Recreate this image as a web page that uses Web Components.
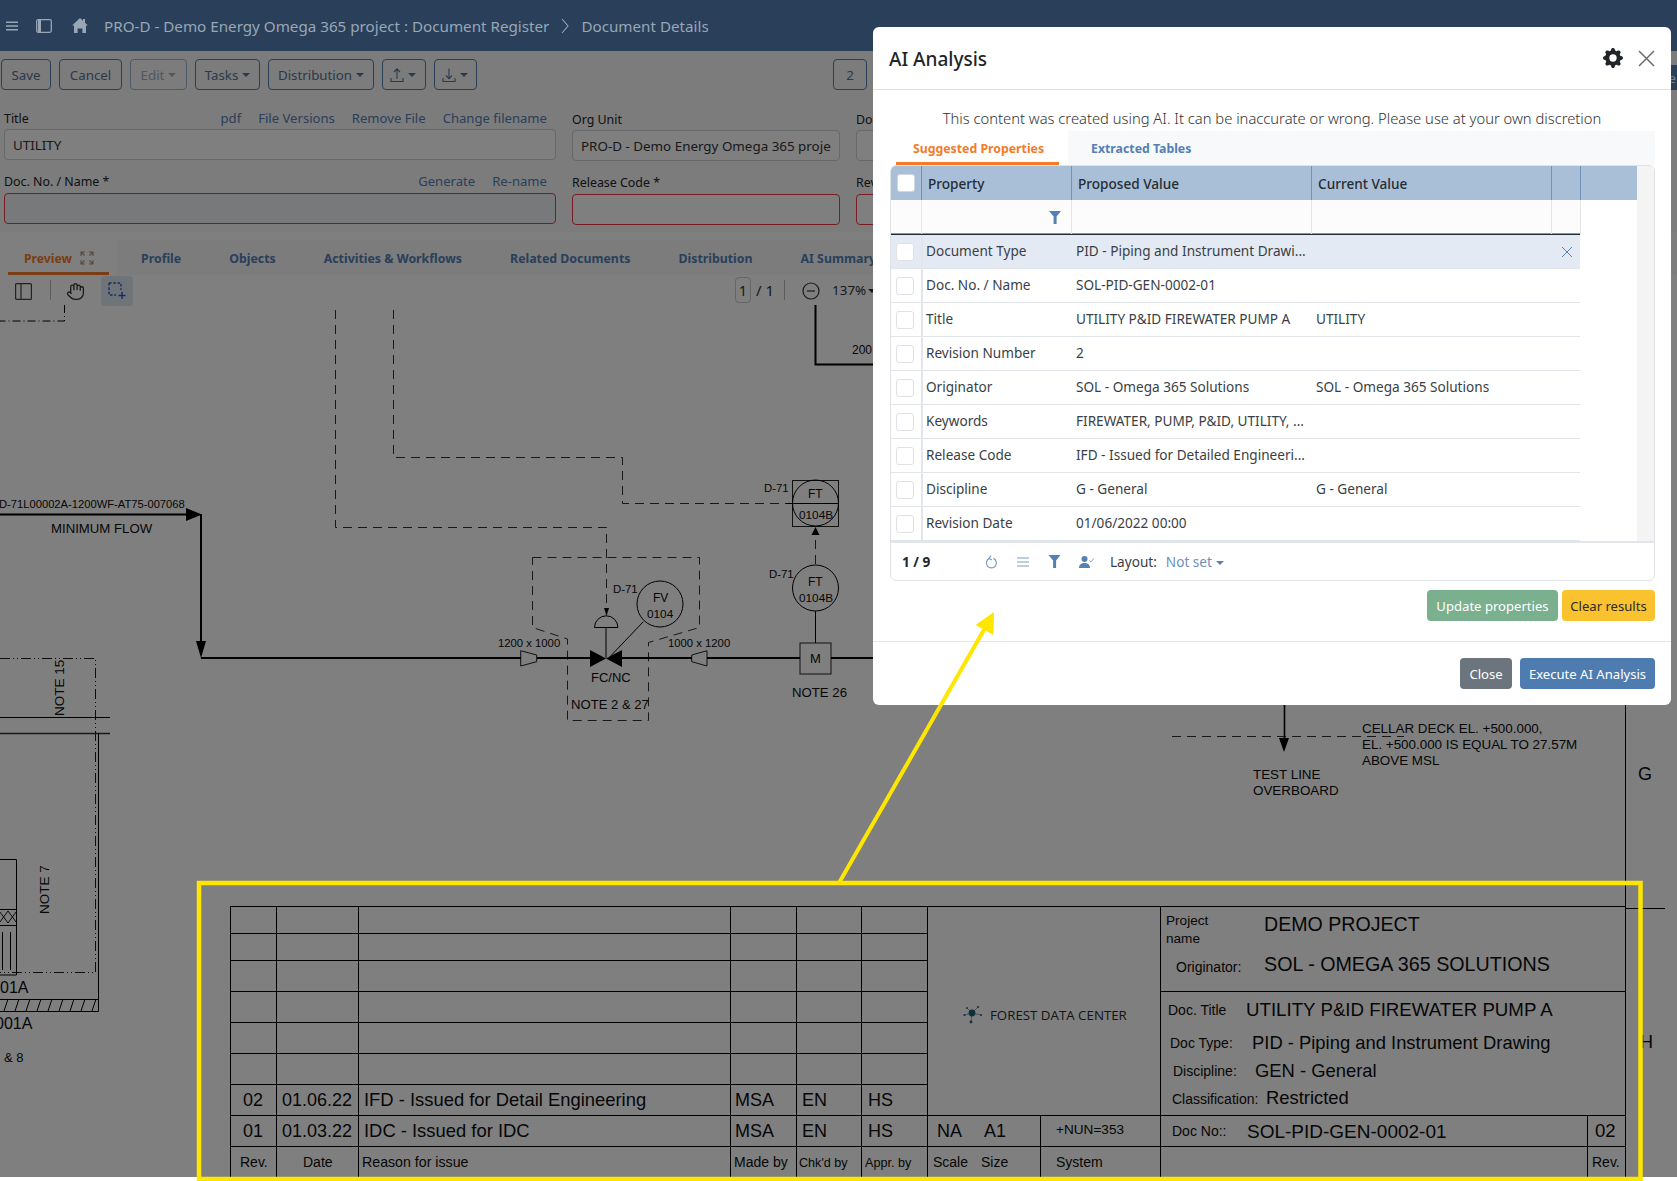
<!DOCTYPE html>
<html>
<head>
<meta charset="utf-8">
<title>AI Analysis</title>
<style>
  html, body { margin: 0; height: 1181px; overflow: hidden; background: #fff; }
  body { position: relative; font-family: "Noto Sans", "Open Sans", sans-serif; font-size: 13px; color: #212529; }
</style>
</head>
<body>
<doc-page>
  <app-header>
    <span>PRO-D - Demo Energy Omega 365 project : Document Register</span>
    <span slot="current">Document Details</span>
  </app-header>
  <doc-toolbar>
    <tool-btn style="width:50px">Save</tool-btn>
    <tool-btn style="width:63px">Cancel</tool-btn>
    <tool-btn style="width:57px" caret disabled>Edit</tool-btn>
    <tool-btn style="width:65px" caret>Tasks</tool-btn>
    <tool-btn style="width:106px" caret>Distribution</tool-btn>
    <tool-btn style="width:44px" caret><svg width="16" height="16" viewBox="0 0 16 16" fill="none" stroke="currentColor" stroke-width="1.1"><path d="M8 12V2M5 5l3-3.2L11 5M2 11v3.5h12V11"/></svg></tool-btn>
    <tool-btn style="width:43px" caret><svg width="16" height="16" viewBox="0 0 16 16" fill="none" stroke="currentColor" stroke-width="1.1"><path d="M8 1.5v10M5 8.5l3 3.2 3-3.2M2 11v3.5h12V11"/></svg></tool-btn>
    <tool-btn style="width:34px;margin-left:348px">2</tool-btn>
    <tool-btn style="width:50px;height:25px;margin-top:6px;margin-left:auto" filled>Close</tool-btn>
  </doc-toolbar>
  <doc-form>
    <doc-field label="Title" value="UTILITY" links="pdf|File Versions|Remove File|Change filename"></doc-field>
    <doc-field label="Org Unit" value="PRO-D - Demo Energy Omega 365 project" style="margin-top:1px"></doc-field>
    <doc-field label="Document Date" style="margin-top:1px"></doc-field>
    <doc-field label="Doc. No. / Name *" links="Generate|Re-name" invalid tinted></doc-field>
    <doc-field label="Release Code *" invalid style="margin-top:1px"></doc-field>
    <doc-field label="Revision *" invalid style="margin-top:1px"></doc-field>
  </doc-form>
  <doc-tabs></doc-tabs>
  <pdf-toolbar></pdf-toolbar>
  <pdf-canvas></pdf-canvas>
  <modal-backdrop></modal-backdrop>
</doc-page>
<ai-modal>
  <ai-grid></ai-grid>
</ai-modal>
<callout-overlay></callout-overlay>

<script>
  class DocPage extends HTMLElement {
    constructor() {
      super();
      this.attachShadow({ mode: 'open' });
      this.shadowRoot.innerHTML = `
        <style>
          :host { display: flex; flex-direction: column; position: relative; height: 1177px; overflow: hidden; background: #fff; }
        </style>
        <slot></slot>`;
    }
  }

  class AppHeader extends HTMLElement {
    constructor() {
      super();
      this.attachShadow({ mode: 'open' });
      this.shadowRoot.innerHTML = `
        <style>
          :host { display: flex; align-items: center; flex: none; height: 51px; background: #2a405a; color: #98a6b5; font-size: 15.2px; position: relative; z-index: 2; }
          svg { display: block; flex: none; }
          .crumb { margin-left: 16px; white-space: nowrap; }
          .sep { margin: 0 11px 0 11px; }
        </style>
        <svg style="margin-left:6px" width="12" height="12" viewBox="0 0 12 12" fill="#98a6b5"><path d="M0 1.5h12v1.6H0zM0 5.2h12v1.6H0zM0 8.9h12v1.6H0z"/></svg>
        <svg style="margin-left:18px" width="16" height="14" viewBox="0 0 16 14" fill="none" stroke="#98a6b5" stroke-width="1.3"><rect x=".7" y=".7" width="14.6" height="12.6" rx="1.5"/><path d="M2 1h3v12H2z" fill="#98a6b5" stroke="none"/></svg>
        <svg style="margin-left:20px" width="16" height="15" viewBox="0 0 16 15" fill="#98a6b5"><path d="M8 0l3 2.8V1h2v3.7L16 7.5h-2V15h-3.6v-4.5H5.6V15H2V7.5H0z"/></svg>
        <span class="crumb"><slot></slot></span>
        <svg class="sep" width="10" height="18" viewBox="0 0 10 18" fill="none" stroke="#98a6b5" stroke-width="1.1"><path d="M2 2l6 7-6 7"/></svg>
        <slot name="current"></slot>`;
    }
  }

  class DocToolbar extends HTMLElement {
    constructor() {
      super();
      this.attachShadow({ mode: 'open' });
      this.shadowRoot.innerHTML = `
        <style>
          :host { display: flex; gap: 8px; flex: none; box-sizing: border-box; height: 39px; padding: 8px 0 0 1px; margin-right: -6px; background: #f8f8f8; }
        </style>
        <slot></slot>`;
    }
  }

  class ToolBtn extends HTMLElement {
    constructor() {
      super();
      this.attachShadow({ mode: 'open' });
      const caret = this.hasAttribute('caret') ? '<i></i>' : '';
      this.shadowRoot.innerHTML = `
        <style>
          :host { display: inline-flex; align-items: center; justify-content: center; box-sizing: border-box; height: 31px; border: 1px solid #5480b4; border-radius: 4px; color: #54749a; font-size: 13.3px; white-space: nowrap; }
          :host([disabled]) { opacity: .55; }
          :host([filled]) { background: #5480b4; color: #fff; justify-content: flex-end; padding-right: 6px; }
          i { display: inline-block; margin-left: 4px; border: 4px solid transparent; border-top-color: currentColor; border-bottom: 0; }
          ::slotted(svg) { display: block; margin-left: -3px; margin-right: -1px; }
        </style>
        <slot></slot>${caret}`;
    }
  }

  class DocForm extends HTMLElement {
    constructor() {
      super();
      this.attachShadow({ mode: 'open' });
      this.shadowRoot.innerHTML = `
        <style>
          :host { display: grid; flex: none; grid-template-columns: 552px 268px 200px; column-gap: 16px; row-gap: 10px; box-sizing: border-box; height: 142px; padding: 18px 0 0 4px; background: #f8f8f8; align-content: start; }
        </style>
        <slot></slot>`;
    }
  }

  class DocField extends HTMLElement {
    constructor() {
      super();
      this.attachShadow({ mode: 'open' });
      const links = (this.getAttribute('links') || '').split('|').filter(Boolean)
        .map(l => `<a>${l}</a>`).join('');
      this.shadowRoot.innerHTML = `
        <style>
          :host { display: block; min-width: 0; font-size: 12.4px; }
          .top { display: flex; height: 21px; align-items: center; padding-bottom: 1px; box-sizing: border-box; }
          :host([invalid]) .top { height: 22px; padding-bottom: 2px; }
          .top span { margin-right: auto; }
          a { margin-left: 17px; color: #5480b4; font-size: 13.1px; }
          .links { display: flex; padding-right: 9px; }
          .box { box-sizing: border-box; height: 31px; line-height: 30px; padding: 0 8px; border: 1px solid #ccd0d5; border-radius: 4px; background: #fff; font-size: 13.4px; color: #333; }
          .box div { overflow: hidden; white-space: nowrap; }
          :host([invalid]) .box { border-color: #f0394c; }
          :host([tinted]) .box { background: #f0f2f7; }
        </style>
        <div class="top"><span>${this.getAttribute('label')}</span><div class="links">${links}</div></div>
        <div class="box"><div>${this.getAttribute('value') || ''}</div></div>`;
    }
  }

  class DocTabs extends HTMLElement {
    constructor() {
      super();
      this.attachShadow({ mode: 'open' });
      const tabs = ['Profile', 'Objects', 'Activities & Workflows', 'Related Documents', 'Distribution', 'AI Summary'];
      this.shadowRoot.innerHTML = `
        <style>
          :host { display: flex; flex: none; height: 35px; margin-top: 8px; font-size: 12.35px; font-weight: 700; color: #5480b4; white-space: nowrap; background: #f8f8f8; }
          .active { display: flex; align-items: center; box-sizing: border-box; width: 117px; padding: 1px 0 0 24px; background: #fff; color: #f47b2a; position: relative; font-size: 12.2px; }
          .active:after { content: ""; position: absolute; left: 8px; width: 101px; bottom: 0; height: 3px; background: #f47b2a; }
          .active svg { margin-left: 8px; }
          .tab { display: flex; align-items: center; padding: 1px 24px 0; }
        </style>
        <div class="active">Preview
          <svg width="14" height="14" viewBox="0 0 14 14" fill="none" stroke="#a89080" stroke-width="1.1"><path d="M1 5V1h4M9 1h4v4M13 9v4H9M5 13H1V9M1 1l3.5 3.5M13 1L9.5 4.5M13 13L9.5 9.5M1 13l3.5-3.5"/></svg>
        </div>
        ${tabs.map(t => `<div class="tab">${t.replace('&', '&amp;')}</div>`).join('')}`;
    }
  }

  class PdfToolbar extends HTMLElement {
    constructor() {
      super();
      this.attachShadow({ mode: 'open' });
      this.shadowRoot.innerHTML = `
        <style>
          :host { display: flex; flex: none; align-items: center; height: 30px; color: #333; white-space: nowrap; }
          svg { display: block; flex: none; }
          .div { width: 1px; height: 20px; background: #bbb; }
          .sel { display: flex; align-items: center; justify-content: center; width: 32px; height: 30px; border-radius: 4px; background: #dfe8f0; margin-top: 2px; }
          .page { box-sizing: border-box; width: 16px; height: 26px; line-height: 24px; text-align: center; border: 1px solid #ccc; border-radius: 4px; font-size: 14.6px; }
          .of { margin-left: 5px; font-size: 15px; }
          .zoom { margin-left: 12px; font-size: 13.4px; }
          .zoom:after { content: ""; display: inline-block; margin-left: 2px; vertical-align: 2px; border: 4px solid transparent; border-top-color: #333; border-bottom: 0; }
        </style>
        <svg style="margin:2px 0 0 15px" width="17" height="17" viewBox="0 0 17 17" fill="none" stroke="#444" stroke-width="1.2"><rect x=".6" y=".6" width="15.8" height="15.8" rx="1"/><path d="M6 1v15"/></svg>
        <div class="div" style="margin-left:18px"></div>
        <svg style="margin:2px 0 0 15px" width="19" height="19" viewBox="0 0 24 24" fill="none" stroke="#333" stroke-width="1.6"><path d="M18 11V6a2 2 0 0 0-2-2a2 2 0 0 0-2 2M14 10V4a2 2 0 0 0-2-2a2 2 0 0 0-2 2v2M10 10.5V6a2 2 0 0 0-2-2a2 2 0 0 0-2 2v8M18 8a2 2 0 1 1 4 0v6a8 8 0 0 1-8 8h-2c-2.8 0-4.5-.86-5.99-2.34l-3.6-3.6a2 2 0 0 1 2.83-2.82L7 15"/></svg>
        <div class="sel" style="margin-left:16px"><svg width="18" height="18" viewBox="0 0 18 18" fill="none" stroke="#2456d6" stroke-width="1.4"><path d="M1 1h12v7M1 1v12h7" stroke-dasharray="2.6 1.7"/><path d="M14 10v7M10.5 13.5h7"/></svg></div>
        <div class="page" style="margin-left:602px">1</div>
        <span class="of">/ 1</span>
        <div class="div" style="margin-left:10px"></div>
        <svg style="margin:2px 0 0 17px" width="18" height="18" viewBox="0 0 18 18" fill="none" stroke="#333" stroke-width="1.2"><circle cx="9" cy="9" r="8"/><path d="M5 9h8"/></svg>
        <span class="zoom">137%</span>`;
    }
  }

  // title block and process lines, in page coordinates
  const t = (x, cy, size, str, extra = '') =>
    `<text x="${x}" y="${(cy + size * (size < 15 ? .38 : .33)).toFixed(1)}" font-size="${size}" ${extra}>${str.replace(/&/g, '&amp;')}</text>`;

  const drawingTexts = [
    [-1, 504, 11.2, 'D-71L00002A-1200WF-AT75-007068'], [51, 528, 13.2, 'MINIMUM FLOW'], [852, 349, 12, '200'],
    [498, 643, 11.3, '1200 x 1000'], [668, 643, 11.3, '1000 x 1200'], [613, 589, 11.4, 'D-71'],
    [653, 597, 12, 'FV'], [647, 613, 11.8, '0104'], [591, 677, 13, 'FC/NC'], [571, 704, 13.1, 'NOTE 2 & 27'],
    [764, 488, 11.4, 'D-71'], [808, 493, 12, 'FT'], [799, 514, 11.8, '0104B'], [769, 574, 11.4, 'D-71'],
    [808, 581, 12, 'FT'], [799, 597, 11.8, '0104B'], [810, 658, 13, 'M'], [792, 692, 13.2, 'NOTE 26'],
    [1362, 728, 13.4, 'CELLAR DECK EL. +500.000,'], [1362, 744, 13.4, 'EL. +500.000 IS EQUAL TO 27.57M'], [1362, 760, 13.4, 'ABOVE MSL'],
    [1253, 774, 13.4, 'TEST LINE'], [1253, 790, 13.4, 'OVERBOARD'], [1638, 774, 18, 'G'], [1640, 1042, 18, 'H'],
    [0, 988, 16, '01A'], [-5, 1024, 16, '001A'], [4, 1057, 13, '& 8'],
    [243, 1100, 18, '02'], [282, 1100, 18, '01.06.22'], [364, 1100, 18.4, 'IFD - Issued for Detail Engineering'],
    [735, 1100, 18, 'MSA'], [802, 1100, 18, 'EN'], [868, 1100, 18, 'HS'],
    [243, 1131, 18, '01'], [282, 1131, 18, '01.03.22'], [364, 1131, 18.4, 'IDC - Issued for IDC'],
    [735, 1131, 18, 'MSA'], [802, 1131, 18, 'EN'], [868, 1131, 18, 'HS'],
    [240, 1162, 14, 'Rev.'], [303, 1162, 14, 'Date'], [362, 1162, 14.2, 'Reason for issue'],
    [734, 1162, 14, 'Made by'], [799, 1162, 12.6, "Chk'd by"], [865, 1162, 12.6, 'Appr. by'],
    [933, 1162, 14, 'Scale'], [981, 1162, 14, 'Size'], [1056, 1162, 14, 'System'],
    [937, 1131, 18, 'NA'], [984, 1131, 18, 'A1'], [1056, 1129, 13.6, '+NUN=353'],
    [1166, 920, 13.6, 'Project'], [1166, 938, 13.6, 'name'], [1264, 924, 19.6, 'DEMO PROJECT'],
    [1176, 967, 14, 'Originator:'], [1264, 964, 19.7, 'SOL - OMEGA 365 SOLUTIONS'],
    [1168, 1010, 14, 'Doc. Title'], [1246, 1010, 18.7, 'UTILITY P&ID FIREWATER PUMP A'],
    [1170, 1043, 14, 'Doc Type:'], [1252, 1043, 18.4, 'PID - Piping and Instrument Drawing'],
    [1173, 1071, 14, 'Discipline:'], [1255, 1071, 18.4, 'GEN - General'],
    [1172, 1099, 14, 'Classification:'], [1266, 1098, 18.4, 'Restricted'],
    [1172, 1131, 14, 'Doc No::'], [1247, 1132, 19, 'SOL-PID-GEN-0002-01'],
    [1595, 1131, 18.6, '02'], [1592, 1162, 14, 'Rev.']
  ];

  // [x1, y1, x2, y2] pairs for the title block grid
  const gridLines = [
    [230, 906.5, 1625, 906.5], [230, 933.5, 927.5, 933.5], [230, 960.5, 927.5, 960.5], [230, 991.5, 927.5, 991.5],
    [230, 1022.5, 927.5, 1022.5], [230, 1053.5, 927.5, 1053.5], [230, 1084.5, 927.5, 1084.5],
    [230, 1115.5, 1625, 1115.5], [230, 1146.5, 1625, 1146.5], [1160.5, 991.5, 1625, 991.5],
    [230.5, 906, 230.5, 1177], [276.5, 906, 276.5, 1177], [358.5, 906, 358.5, 1177], [730.5, 906, 730.5, 1177],
    [796.5, 906, 796.5, 1177], [861.5, 906, 861.5, 1177], [927.5, 906, 927.5, 1177], [1040.5, 1115, 1040.5, 1177],
    [1160.5, 906, 1160.5, 1177], [1587.5, 1115, 1587.5, 1177], [1625.5, 705, 1625.5, 1177], [1625, 908.5, 1665, 908.5]
  ];

  class PdfCanvas extends HTMLElement {
    constructor() {
      super();
      this.attachShadow({ mode: 'open' });
      const hatch = Array.from({ length: 9 }, (_, i) => `M${4 + i * 11} 1011L${8 + i * 11} 999`).join('');
      const lines = gridLines.map(l => `M${l[0]} ${l[1]}L${l[2]} ${l[3]}`).join('');
      this.shadowRoot.innerHTML = `
        <style>
          :host { display: block; flex: 1; min-height: 0; }
          svg { display: block; font-family: "Liberation Sans", Arial, sans-serif; }
          text { fill: #0c0c0c; }
          .dash { stroke: #1a1a1a; stroke-width: .9; stroke-dasharray: 9 6; }
        </style>
        <svg width="1677" height="872" viewBox="0 305 1677 872">
          <g fill="none" stroke="#000" stroke-width="1">
            <path d="M64.5 305V321H0" stroke-dasharray="8 3 1 3"/>
            <path class="dash" d="M335.5 310V527.5H606.5V612"/>
            <path class="dash" d="M393.5 310V457.5H622.5V503.5H790"/>
            <path class="dash" d="M532.5 557.5H699.5V627.5L648.5 642.5V720.5H567.5V639L532.5 627.5Z"/>
            <path class="dash" d="M815.5 564V536"/>
            <path class="dash" d="M1172 736.5H1404"/>
            <path d="M0 658.5H95.5V972.5H0" stroke-dasharray="10 3 1 3 1 3" stroke-width=".9"/>
            <path d="${lines}"/>
            <path d="M0 717.5H110"/>
            <path d="M0 733.5H110" stroke-width="1.4" stroke="#333"/>
            <path d="M98.5 733V1011.5H0M0 999.5H98"/>
            <path d="${hatch}"/>
            <path d="M0 859.5H16.5V975H0M0 909.5H16M0 925.5H16M2.5 932V970M10.5 932V970"/>
            <path d="M0 912l8 11l8-11M0 922l8-11l8 11" stroke-width=".9"/>
            <path d="M815.5 305V364.5H873" stroke-width="2"/>
            <rect x="792.5" y="480.5" width="46" height="46" stroke="#222"/>
            <circle cx="815.5" cy="503" r="23"/>
            <path d="M786 503.5H839"/>
            <circle cx="815.5" cy="588" r="23"/>
            <path d="M815.5 611V643"/>
            <rect x="800" y="643" width="31" height="31" stroke="#222"/>
            <circle cx="660" cy="604" r="23"/>
            <path d="M643.3 621.7L610 656.7M606 627V658"/>
            <path d="M594.5 627.5a11.7 11.7 0 0 1 23.4 0Z"/>
            <path d="M520.7 650.7L536.7 655V661.7L520.7 666Z M691.7 655L707 650.7V666L691.7 661.7Z" stroke="#222"/>
            <path d="M0 514.5H190M201 514V645M201 658H521M537 658H590M622 658H692M707 658H800M831 658H873" stroke-width="2"/>
            <path d="M1284.5 705V740" stroke-width="1.6"/>
          </g>
          <path d="M590 650V667L606 658.5ZM622 650V667L606 658.5ZM186 508V521L202 514.5ZM196 641H206L201 658ZM604 608H609L606.5 616ZM811.5 535H819.5L815.5 527ZM1279 738H1289L1284 752Z" fill="#000"/>
          ${drawingTexts.map(d => t(d[0], d[1], d[2], d[3])).join('')}
          <text transform="translate(64,716) rotate(-90)" font-size="13.5">NOTE 15</text>
          <text transform="translate(49,914) rotate(-90)" font-size="13.5">NOTE 7</text>
          <g fill="#1e5f78">
            <circle cx="972" cy="1013" r="3.4"/><circle cx="964.5" cy="1015" r="1.1"/><circle cx="967" cy="1008" r=".9"/>
            <circle cx="978" cy="1007" r="1"/><circle cx="981" cy="1015" r="1"/><circle cx="971" cy="1022" r="1.4"/>
            <path d="M972 1013L967 1008M972 1013L978 1007M972 1013L964.5 1015M972 1013L971 1022M972 1013L981 1015" stroke="#1e5f78" stroke-width=".5"/>
          </g>
          <text x="990" y="1019.5" font-size="13.3" style="font-family:'Open Sans',sans-serif;fill:#2b2b2b">FOREST DATA CENTER</text>
        </svg>`;
    }
  }

  class ModalBackdrop extends HTMLElement {
    constructor() {
      super();
      this.attachShadow({ mode: 'open' });
      this.shadowRoot.innerHTML = `
        <style>
          :host { display: block; position: absolute; left: 0; right: 0; top: 51px; bottom: 0; background: rgba(0, 0, 0, .5); z-index: 1; }
        </style>`;
    }
  }

  class AiModal extends HTMLElement {
    constructor() {
      super();
      this.attachShadow({ mode: 'open' });
      this.shadowRoot.innerHTML = `
        <style>
          :host { display: flex; flex-direction: column; position: absolute; left: 873px; top: 27px; width: 798px; height: 678px; box-sizing: border-box; background: #fff; border-radius: 6px; z-index: 3; color: #212529; }
          header { display: flex; align-items: center; flex: none; box-sizing: border-box; height: 63px; padding: 0 16px; border-bottom: 1px solid #dee2e6; }
          h1 { margin: 0 auto 0 0; padding-top: 2px; font-size: 19px; font-weight: 500; }
          header svg { display: block; }
          .main { flex: none; padding: 0 16px; }
          .note { height: 41px; box-sizing: border-box; padding-top: 18px; line-height: 21px; text-align: center; font-size: 14.75px; font-weight: 300; color: #333; white-space: nowrap; }
          .tabs { display: flex; height: 34px; background: linear-gradient(to right, #fff 178px, #f8f9fa 178px); font-size: 12.3px; font-weight: 700; margin-left: 1px; }
          .tabs div { display: flex; align-items: center; box-sizing: border-box; }
          .on { width: 163px; margin-left: 6px; padding: 4px 0 0 2px; justify-content: center; color: #f47b2a; border-bottom: 3px solid #f47b2a; }
          .off { margin-left: 32px; color: #5480b4; }
          .actions { display: flex; justify-content: flex-end; gap: 4px; margin-top: 9px; padding-bottom: 20px; }
          footer { display: flex; justify-content: flex-end; gap: 8px; padding: 16px 16px; border-top: 1px solid #e4e6e8; }
          button { box-sizing: border-box; height: 31px; padding: 1px 0 0; border: 0; border-radius: 4px; font: inherit; font-size: 13.1px; color: #fff; }
        </style>
        <header>
          <h1>AI Analysis</h1>
          <svg style="margin-right:15px" width="20" height="20" viewBox="0 0 16 16" fill="#212529"><path d="M9.405 1.05c-.413-1.4-2.397-1.4-2.81 0l-.1.34a1.464 1.464 0 0 1-2.105.872l-.31-.17c-1.283-.698-2.686.705-1.987 1.987l.169.311c.446.82.023 1.841-.872 2.105l-.34.1c-1.4.413-1.4 2.397 0 2.81l.34.1a1.464 1.464 0 0 1 .872 2.105l-.17.31c-.698 1.283.705 2.686 1.987 1.987l.311-.169a1.464 1.464 0 0 1 2.105.872l.1.34c.413 1.4 2.397 1.4 2.81 0l.1-.34a1.464 1.464 0 0 1 2.105-.872l.31.17c1.283.698 2.686-.705 1.987-1.987l-.169-.311a1.464 1.464 0 0 1 .872-2.105l.34-.1c1.4-.413 1.4-2.397 0-2.81l-.34-.1a1.464 1.464 0 0 1-.872-2.105l.17-.31c.698-1.283-.705-2.686-1.987-1.987l-.311.169a1.464 1.464 0 0 1-2.105-.872l-.1-.34zM8 10.93a2.929 2.929 0 1 1 0-5.86 2.929 2.929 0 0 1 0 5.858z"/></svg>
          <svg width="17" height="17" viewBox="0 0 17 17" fill="none" stroke="#6d6d6d" stroke-width="1.5"><path d="M1 1l15 15M16 1L1 16"/></svg>
        </header>
        <div class="main">
          <div class="note">This content was created using AI. It can be inaccurate or wrong. Please use at your own discretion</div>
          <div class="tabs"><div class="on">Suggested Properties</div><div class="off">Extracted Tables</div></div>
          <slot></slot>
          <div class="actions">
            <button style="width:131px;background:#7bb08f">Update properties</button>
            <button style="width:93px;background:#fac22e;color:#2b2b2b">Clear results</button>
          </div>
        </div>
        <footer>
          <button style="width:52px;background:#6c757d">Close</button>
          <button style="width:135px;background:#4f7cb0">Execute AI Analysis</button>
        </footer>`;
    }
  }

  class AiGrid extends HTMLElement {
    constructor() {
      super();
      this.attachShadow({ mode: 'open' });
      const rows = [
        ['Document Type', 'PID - Piping and Instrument Drawi...', ''],
        ['Doc. No. / Name', 'SOL-PID-GEN-0002-01', ''],
        ['Title', 'UTILITY P&ID FIREWATER PUMP A', 'UTILITY'],
        ['Revision Number', '2', ''],
        ['Originator', 'SOL - Omega 365 Solutions', 'SOL - Omega 365 Solutions'],
        ['Keywords', 'FIREWATER, PUMP, P&ID, UTILITY, ...', ''],
        ['Release Code', 'IFD - Issued for Detailed Engineeri...', ''],
        ['Discipline', 'G - General', 'G - General'],
        ['Revision Date', '01/06/2022 00:00', '']
      ];
      const funnel = '<svg width="12" height="13" viewBox="0 0 12 13" fill="#5480b4"><path d="M0 0h12L7.6 5.6V13H4.6V5.6z"/></svg>';
      const rowsHTML = rows.map((r, i) => `
        <div class="row${i === 0 ? ' sel' : ''}">
          <div class="c0"><b class="check"></b></div>
          <div class="c">${r[0]}</div>
          <div class="c">${r[1].replace(/&/g, '&amp;')}</div>
          <div class="c">${r[2]}</div>
          <div class="cx">${i === 0 ? '<svg width="12" height="12" viewBox="0 0 12 12" fill="none" stroke="#5480b4" stroke-width="1"><path d="M1 1l10 10M11 1L1 11"/></svg>' : ''}</div>
        </div>`).join('');
      this.shadowRoot.innerHTML = `
        <style>
          :host { display: flex; flex-direction: column; box-sizing: border-box; height: 416px; margin-left: 1px; border: 1px solid #dfe3e8; border-radius: 6px; overflow: hidden; font-size: 13.6px; color: #3a3f45; }
          .body { display: flex; flex: none; height: 375px; }
          .table { width: 746px; flex: none; }
          .gutter { flex: 1; background: #f4f4f4; }
          .row, .head, .filter { display: grid; grid-template-columns: 31px 150px 240px 240px 29px; height: 34px; align-items: stretch; }
          .row, .filter { width: 689px; }
          .head { height: 34px; grid-template-columns: 31px 150px 240px 240px 29px 1fr; background: #a8bfd7; font-weight: 500; color: #262c33; }
          .head > div { display: flex; align-items: center; padding-left: 6px; border-right: 1px solid #6f92b8; }
          .head > div:last-child { border-right: 0; }
          .filter { height: 35px; box-sizing: border-box; border-bottom: 1px solid #1f2b3a; box-shadow: inset 0 -1px 0 #8f959d; background: #fcfcfc; }
          .filter > div { border-right: 1px solid #e4e6e8; display: flex; align-items: center; justify-content: flex-end; padding-right: 10px; }
          .row { border-bottom: 1px solid #e2e5ea; box-sizing: border-box; }
          .row.sel { background: #e4eaf3; }
          .c0 { border-right: 2px solid #e2e5ea; display: flex; align-items: center; padding-left: 5px; margin-right: -1px; }
          .c { display: flex; align-items: center; padding: 0 0 2px 4px; white-space: nowrap; overflow: hidden; }
          .cx { display: flex; align-items: center; justify-content: center; }
          .check { display: block; width: 18px; height: 18px; box-sizing: border-box; background: #fff; border: 1px solid #dfe1e5; border-radius: 3px; }
          .head .check { border: 1px solid #cfd8e2; }
          .foot { display: flex; align-items: center; flex: 1; border-top: 2px solid #e2e5ea; box-sizing: border-box; font-size: 13.6px; }
          .foot b { width: 83px; margin-left: 11px; color: #212529; }
          .foot svg { display: block; margin-right: 19px; flex: none; }
          .foot .set { color: #6f8fb9; margin-left: 9px; }
          .foot .set:after { content: ""; display: inline-block; margin-left: 4px; vertical-align: 2px; border: 4px solid transparent; border-top-color: #5480b4; border-bottom: 0; }
        </style>
        <div class="body">
          <div class="table">
            <div class="head">
              <div><b class="check"></b></div><div>Property</div><div>Proposed Value</div><div>Current Value</div><div></div><div></div>
            </div>
            <div class="filter"><div></div><div>${funnel}</div><div></div><div></div><div></div></div>
            ${rowsHTML}
          </div>
          <div class="gutter"></div>
        </div>
        <div class="foot">
          <b>1 / 9</b>
          <svg width="13" height="14" viewBox="0 0 13 14" fill="none" stroke="#7f9cc2" stroke-width="1.2"><path d="M8.5 3.4a5 5 0 1 1-4.2 0"/><path d="M6 .5L4 3.4l3 1.6" /></svg>
          <svg width="12" height="10" viewBox="0 0 12 10" fill="none" stroke="#7f9cc2" stroke-width="1.2"><path d="M0 1h12M0 5h12M0 9h12"/></svg>
          <svg style="margin-right:18px" width="13" height="13" viewBox="0 0 12 13" fill="#5480b4"><path d="M0 0h12L7.6 5.6V13H4.6V5.6z"/></svg>
          <svg style="margin-right:16px" width="15" height="12" viewBox="0 0 15 12" fill="#5480b4"><circle cx="5.5" cy="3" r="3"/><path d="M0 12c0-3.4 2.3-5 5.5-5s5.5 1.6 5.5 5z"/><path d="M10.5 4.5l1.4 1.4L15 2.5" fill="none" stroke="#7f9cc2" stroke-width="1"/></svg>
          <span>Layout:</span><span class="set">Not set</span>
        </div>`;
    }
  }

  class CalloutOverlay extends HTMLElement {
    constructor() {
      super();
      this.attachShadow({ mode: 'open' });
      this.shadowRoot.innerHTML = `
        <style>
          :host { display: block; position: absolute; left: 0; top: 0; width: 1677px; height: 1181px; z-index: 4; pointer-events: none; }
          svg { display: block; }
        </style>
        <svg width="1677" height="1181" viewBox="0 0 1677 1181">
          <rect x="199" y="883" width="1441.5" height="296" fill="none" stroke="#ffe600" stroke-width="4.5"/>
          <path d="M839 883L985 628" stroke="#ffe600" stroke-width="4" fill="none"/>
          <path d="M994 612L975.5 625L993.5 635Z" fill="#ffe600"/>
        </svg>`;
    }
  }

  customElements.define('doc-page', DocPage);
  customElements.define('app-header', AppHeader);
  customElements.define('doc-toolbar', DocToolbar);
  customElements.define('tool-btn', ToolBtn);
  customElements.define('doc-form', DocForm);
  customElements.define('doc-field', DocField);
  customElements.define('doc-tabs', DocTabs);
  customElements.define('pdf-toolbar', PdfToolbar);
  customElements.define('pdf-canvas', PdfCanvas);
  customElements.define('modal-backdrop', ModalBackdrop);
  customElements.define('ai-modal', AiModal);
  customElements.define('ai-grid', AiGrid);
  customElements.define('callout-overlay', CalloutOverlay);
</script>
</body>
</html>
